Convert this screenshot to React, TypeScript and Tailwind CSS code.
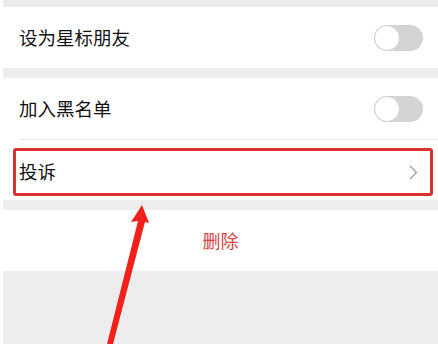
import React from 'react'

const font = { fontFamily: '"Noto Sans CJK SC", "Noto Sans", sans-serif' }

function Toggle() {
  return (
    <div className="relative h-[26px] w-[49px] rounded-full bg-[#d4d4d4]">
      <div className="absolute left-0 top-0 h-[26px] w-[26px] rounded-full border border-[#d0d0d0] bg-white" />
    </div>
  )
}

function Gap({ h }: { h: string }) {
  return <div className={`bg-[#ededed] ${h}`} />
}

export default function App() {
  return (
    <div className="relative h-[344px] w-[438px] overflow-hidden bg-white pl-[3px]" style={font}>
      <div className="flex h-full flex-col bg-[#ededed]">
        <Gap h="h-[7px]" />
        <div className="flex h-[61px] items-center justify-between bg-white pl-4 pr-[15px] text-[18.5px] text-[#111]">
          <span>设为星标朋友</span>
          <Toggle />
        </div>
        <Gap h="h-[10px]" />
        <div className="bg-white">
          <div className="flex h-[61px] items-center justify-between pl-4 pr-[15px] text-[18.5px] text-[#111]">
            <span>加入黑名单</span>
            <Toggle />
          </div>
          <div className="ml-4 h-px bg-[#e8e8e8]" />
          <div className="pb-[4px] pl-[10px] pr-[5px] pt-[8px]">
            <div className="flex h-[48px] items-center justify-between rounded-[3px] border-[3px] border-[#d8322f] pl-[3px] pr-[12px] text-[18.5px] text-[#111]">
              <span>投诉</span>
              <svg width="9" height="15" viewBox="0 0 9 15" fill="none">
                <path d="M1 1l6.5 6.5L1 14" stroke="#9a9a9a" strokeWidth="1.2" />
              </svg>
            </div>
          </div>
        </div>
        <Gap h="h-[10px]" />
        <div className="flex h-[61px] items-center justify-center bg-white text-[18px] text-[#d6453f]">
          删除
        </div>
        <div className="flex-1 bg-[#ededed]" />
      </div>
      <svg className="pointer-events-none absolute left-0 top-0" width="438" height="344" viewBox="0 0 438 344">
        <path d="M142 205 L149 223 L145 222 L113 344 L107 344 L138 221 L131 222 Z" fill="#f2201a" />
      </svg>
    </div>
  )
}
